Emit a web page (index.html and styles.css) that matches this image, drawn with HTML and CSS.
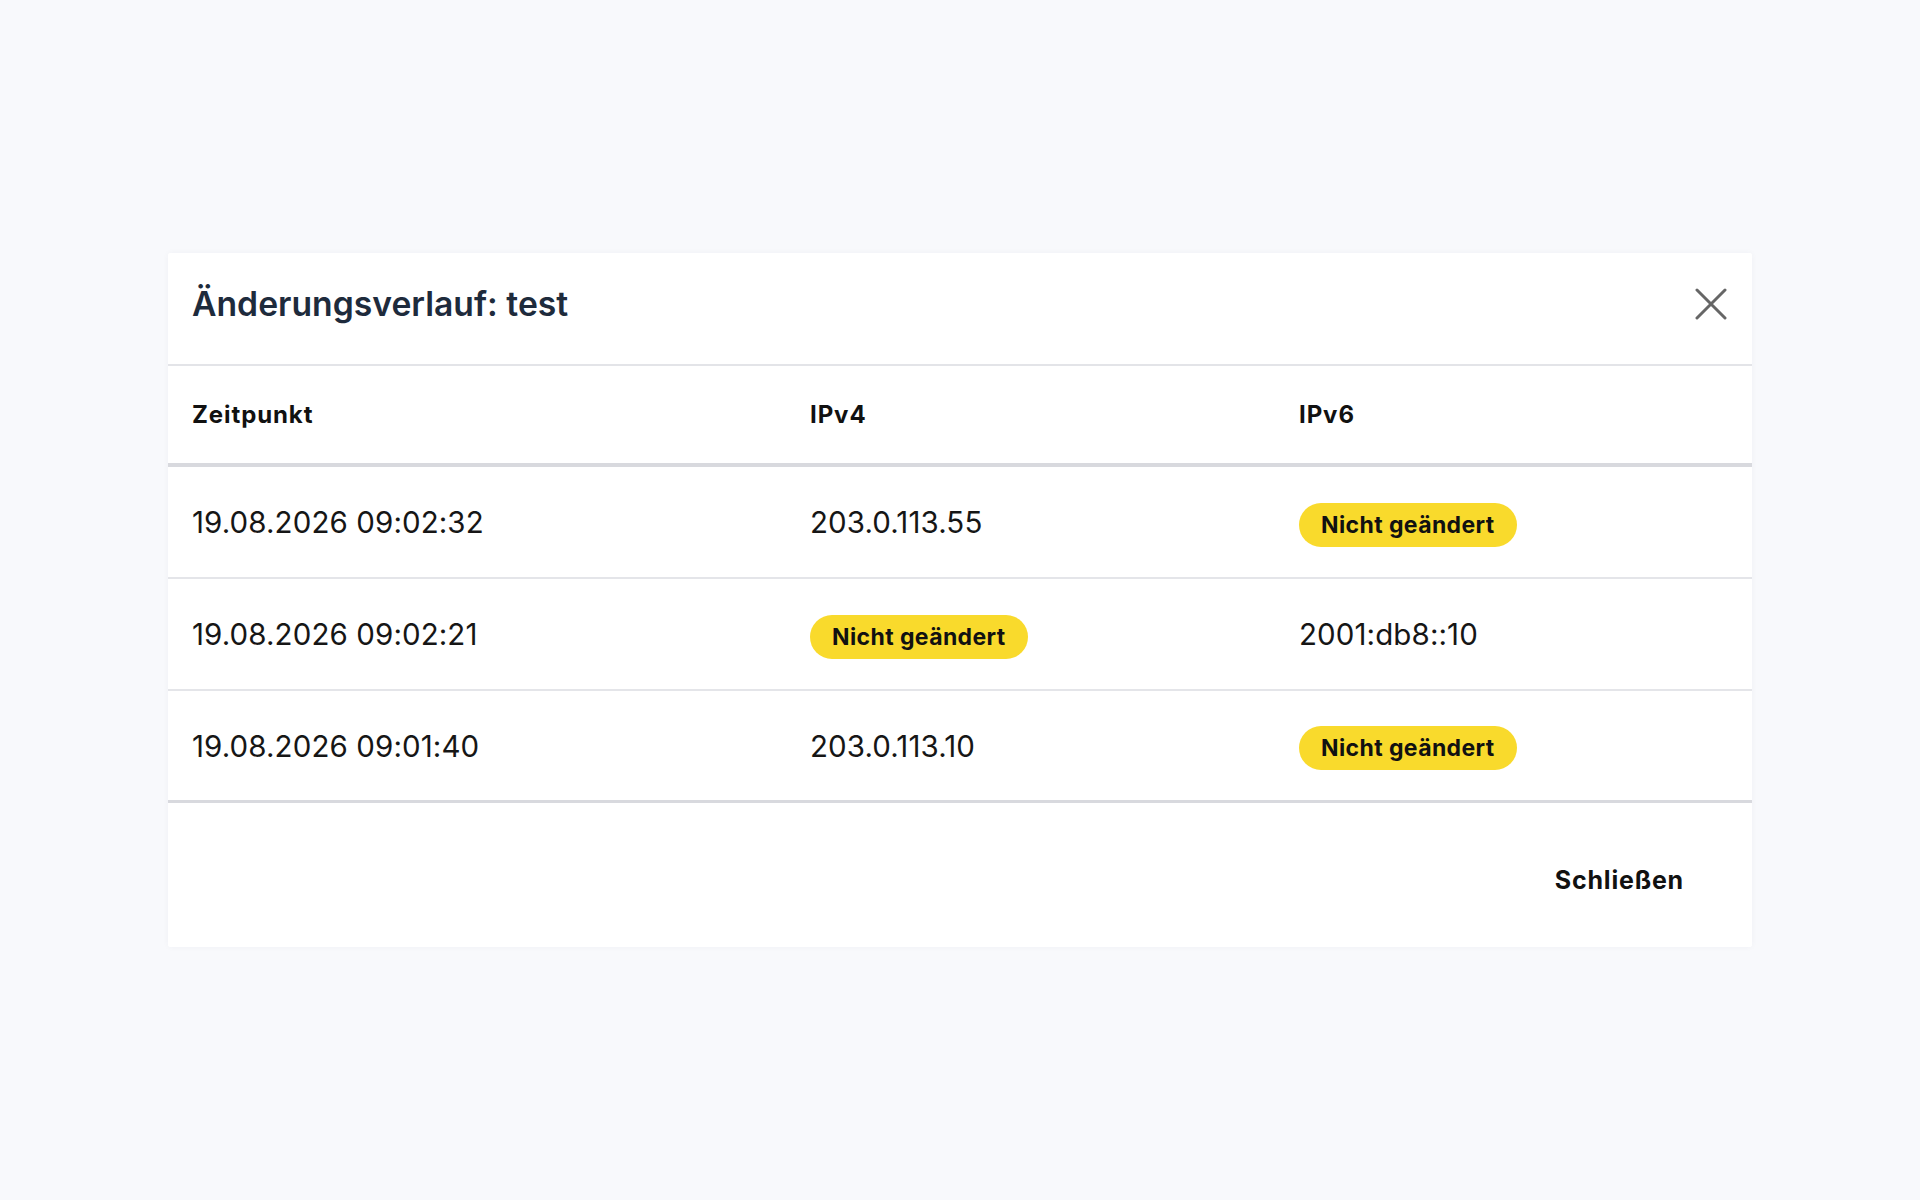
FILE: index.html
```html
<!DOCTYPE html>
<html lang="de">
<head>
<meta charset="utf-8">
<title>Änderungsverlauf</title>
<link rel="stylesheet" href="styles.css">
</head>
<body>
<div class="modal">
  <div class="modal-header">
    <h2 class="modal-title">Änderungsverlauf: test</h2>
    <button class="close-btn" aria-label="Schließen">
      <svg width="32" height="32" viewBox="0 0 32 32"><path d="M2 2 L30 30 M30 2 L2 30" stroke="#666" stroke-width="3" stroke-linecap="round" fill="none"/></svg>
    </button>
  </div>
  <div class="table">
    <div class="row head">
      <div class="cell">Zeitpunkt</div>
      <div class="cell">IPv4</div>
      <div class="cell">IPv6</div>
    </div>
    <div class="row">
      <div class="cell">19.08.2026 09:02:32</div>
      <div class="cell">203.0.113.55</div>
      <div class="cell"><span class="badge">Nicht geändert</span></div>
    </div>
    <div class="row">
      <div class="cell">19.08.2026 09:02:21</div>
      <div class="cell"><span class="badge">Nicht geändert</span></div>
      <div class="cell">2001:db8::10</div>
    </div>
    <div class="row last">
      <div class="cell">19.08.2026 09:01:40</div>
      <div class="cell">203.0.113.10</div>
      <div class="cell"><span class="badge">Nicht geändert</span></div>
    </div>
  </div>
  <div class="modal-footer">
    <button class="text-btn">Schließen</button>
  </div>
</div>
</body>
</html>
```
FILE: styles.css
```css
html, body {
  margin: 0;
  padding: 0;
}
body {
  background: #f8f9fc;
  height: 100vh;
  display: flex;
  align-items: center;
  justify-content: center;
  font-family: Inter, "Noto Sans", sans-serif;
  color: #161616;
}
.modal {
  width: 1584px;
  background: #fff;
  box-shadow: 0 0 6px rgba(30, 40, 70, 0.04);
  border-radius: 2px;
}
.modal-header {
  box-sizing: border-box;
  height: 113px;
  display: flex;
  align-items: center;
  justify-content: space-between;
  padding: 0 25px 10px 24px;
  border-bottom: 2px solid #e3e4e8;
}
.modal-title {
  margin: 0;
  font-size: 33.7px;
  font-weight: 600;
  color: #1e2b3c;
  letter-spacing: 0;
}
.close-btn {
  background: none;
  border: 0;
  padding: 0;
  width: 32px;
  height: 32px;
  display: flex;
  cursor: pointer;
}
.row {
  box-sizing: border-box;
  display: grid;
  grid-template-columns: 618px 489px 1fr;
  align-items: center;
  height: 112px;
  border-bottom: 2px solid #e4e5e9;
}
.row.head {
  height: 101px;
  border-bottom: 4px solid #d8d9de;
  font-weight: 700;
  color: #111;
}
.row.last {
  height: 112px;
  border-bottom: 3px solid #d8d9de;
}
.cell {
  padding-left: 24px;
  font-size: 29.5px;
  letter-spacing: 0.1px;
}
.row.head .cell {
  font-size: 24px;
  letter-spacing: 0.9px;
}
.badge {
  display: inline-flex;
  align-items: center;
  height: 44px;
  margin-top: 5px;
  padding: 0 22px;
  border-radius: 22px;
  background: #f9da2c;
  color: #111;
  font-size: 23px;
  font-weight: 700;
  letter-spacing: 0.4px;
}
.modal-footer {
  box-sizing: border-box;
  height: 144px;
  display: flex;
  align-items: center;
  justify-content: flex-end;
  padding: 10px 44px 0 44px;
}
.text-btn {
  background: none;
  border: 0;
  padding: 12px 24px;
  font-family: Inter, "Noto Sans", sans-serif;
  font-size: 25px;
  font-weight: 700;
  letter-spacing: 0.8px;
  color: #111;
  cursor: pointer;
}
```
